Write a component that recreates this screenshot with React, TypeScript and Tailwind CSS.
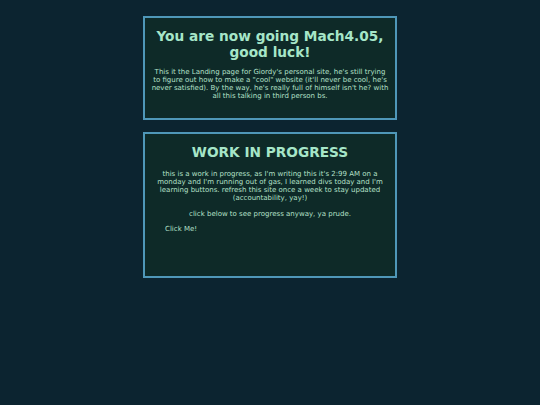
export default function App() {
  return (
    <div
      className="min-h-[405px] w-full bg-[#0c2430] text-[#b4e0c9] pt-4"
      style={{ fontFamily: '"DejaVu Sans", Verdana, sans-serif' }}
    >
      <div className="mx-auto w-[254px] flex flex-col gap-3">
        <div className="border-2 border-[#4f97b8] bg-[#0e2a28] px-[6px] pt-[10px] pb-[18px] text-center">
          <h1 className="text-[13.7px] font-bold leading-[16px] text-[#a6e6c8]">
            You are now going Mach4.05, good luck!
          </h1>
          <p className="mt-2 text-[7px] leading-[8px]">
            This it the Landing page for Giordy's personal site, he's still trying
            <br />
            to figure out how to make a "cool" website (it'll never be cool, he's never satisfied). By the way, he's really full of himself isn't he? with all this talking in third person bs.
          </p>
        </div>
        <div className="border-2 border-[#4f97b8] bg-[#0e2a28] px-2 pt-[10px] h-[146px] text-center">
          <h2 className="text-[13.7px] font-bold leading-[16px] text-[#a6e6c8]">WORK IN PROGRESS</h2>
          <p className="mt-[10px] text-[7px] leading-[8px]">
            this is a work in progress, as I'm writing this it's 2:99 AM on a monday and I'm running out of gas, I learned divs today and I'm learning buttons. refresh this site once a week to stay updated (accountability, yay!)
          </p>
          <p className="mt-2 text-[7px] leading-[8px]">click below to see progress anyway, ya prude.</p>
          <div className="text-left pl-3 mt-[7px] text-[7px] leading-[8px]">
            <button className="block text-[7px] leading-[8px] text-[#b4e0c9]">Click Me!</button>
          </div>
        </div>
      </div>
    </div>
  );
}
